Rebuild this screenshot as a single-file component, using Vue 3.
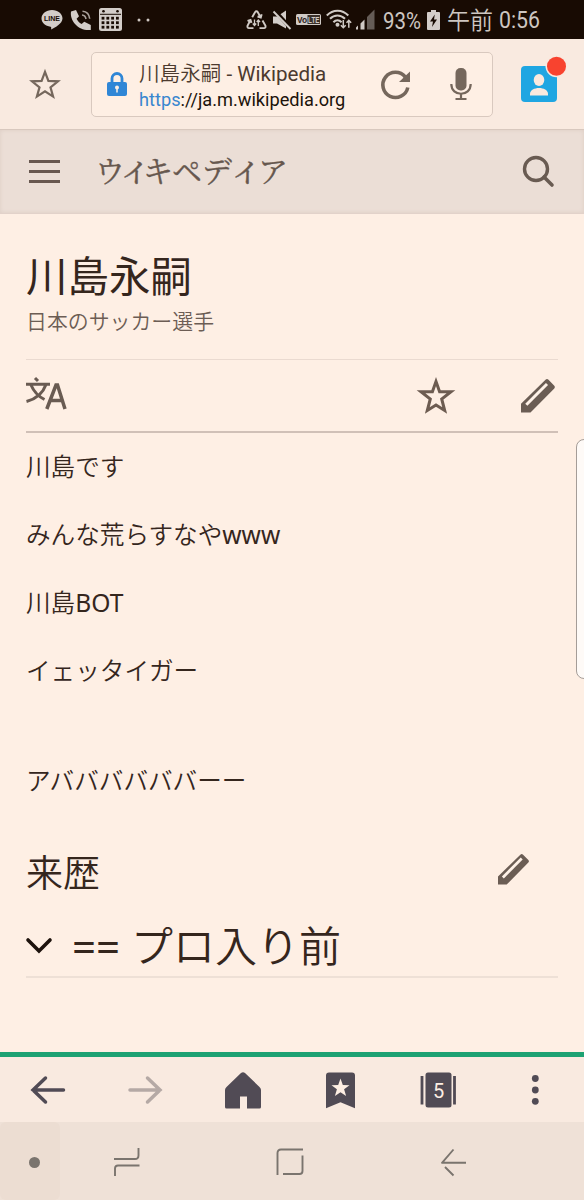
<template>
  <div class="screen">
    <header class="status">
      <svg class="status__line" width="22" height="22" viewBox="0 0 22 22">
        <path d="M11 1C5 1 .5 4.800.5 9.500c0 4.300 4 7.500 9 8.200.9.200.8.900.6 2.700 3.500-1.500 11.400-5.800 11.400-10.900C21.500 4.800 17 1 11 1z" fill="#d3cdc9" />
        <text x="11" y="12" text-anchor="middle" class="line-text">LINE</text>
      </svg>
      <svg class="status__phone" width="22" height="22" viewBox="0 0 22 22">
        <path d="M1 2.500 6 1l3 6.300-2.400 2.500c1 2.300 2.600 4 5 5.200l2.700-2.300 6.500 3.200v5C9.500 22.500-.5 12.500 1 2.500z" fill="#d3cdc9" />
        <path d="M12.500 2.200c4 .3 6.800 3.300 7.200 7.600M12 6c2.200.2 3.600 1.600 4 4" fill="none" stroke="#aaa29c" stroke-width="1.600" />
      </svg>
      <svg class="status__calendar" width="23" height="23" viewBox="0 0 23 23">
        <rect width="23" height="23" rx="2.500" fill="#d3cdc9" />
        <path d="M1 6.300h21" stroke="#180b03" stroke-width="1" />
        <circle cx="4.500" cy="3.200" r="1.300" fill="#180b03" />
        <circle cx="18.500" cy="3.200" r="1.300" fill="#180b03" />
        <g fill="#180b03">
          <rect v-for="cell in calendarCells" :key="cell.id" :x="cell.x" :y="cell.y" width="2.800" height="2.800" />
        </g>
      </svg>
      <svg class="status__dots" width="14" height="4" viewBox="0 0 14 4">
        <circle cx="2" cy="2" r="1.500" fill="#cfc8c3" />
        <circle cx="11" cy="2" r="1.500" fill="#cfc8c3" />
      </svg>
      <svg class="status__recycle" width="21" height="20" viewBox="0 0 21 20">
        <g fill="none" stroke="#d0cac5" stroke-width="1.900">
          <path d="M6.200 7.200 9 2.200q1.400-1.800 2.800 0l2.700 4.800M11.500 6.500l3.300 1 .9-3.300M16.500 10.500l3 5.300q.3 2.200-1.500 2.300h-4.500M4.500 10l-3 5.700q-.4 2.200 1.500 2.400h4.500M1.500 10.800l3-.9 1 3" />
          <path d="M8.500 9.500v6M6.800 13.500l1.700 2 1.700-2M12.300 16v-6M10.700 12l1.600-2 1.700 2" stroke-width="1.300" />
        </g>
      </svg>
      <svg class="status__mute" width="19" height="20" viewBox="0 0 19 20">
        <path d="M0 6.500h4L13 .5v18l-9-5H0z" fill="#d3cdc9" />
        <path d="M1.500.5 18 18.500" stroke="#180b03" stroke-width="4" />
        <path d="M.5 1.500 17.500 19" stroke="#d3cdc9" stroke-width="1.900" />
      </svg>
      <svg class="status__volte" width="25" height="11" viewBox="0 0 25 11">
        <rect width="25" height="11" rx="1.500" fill="#d0cac5" />
        <rect x="11.500" y="1" width="12.500" height="9" fill="#3b3029" />
        <text x="1" y="8.800" textLength="10" lengthAdjust="spacingAndGlyphs" class="volte-text">Vo</text>
        <text x="12" y="8.800" textLength="11.500" lengthAdjust="spacingAndGlyphs" class="volte-text volte-text--light">LTE</text>
      </svg>
      <svg class="status__wifi" width="26" height="21" viewBox="0 0 26 21">
        <g fill="none" stroke="#d0cac5" stroke-width="2">
          <path d="M.8 6.500c6-6.500 15.500-6.500 21.500 0M4 9.800c4.300-4.500 10.500-4.500 15 0M7.400 13.200c2.500-2.600 5.600-2.600 8.200 0" />
          <path d="M17.300 11v7.500M14.900 16.300l2.400 2.400 2.400-2.400M22.800 18.700v-7M20.500 13.700l2.300-2.300 2.400 2.300" stroke-width="1.500" />
        </g>
        <circle cx="11.500" cy="15.800" r="2" fill="#d0cac5" />
      </svg>
      <svg class="status__signal" width="19" height="21" viewBox="0 0 19 21">
        <path d="M0 20.500v-2l2-2v4zM4.500 20.500v-6l4-4v10z" fill="#d0cac5" />
        <path d="M11 20.500V8l7.500-7.500v20z" fill="#655c56" />
      </svg>
      <svg class="status__percent" width="40" height="36" viewBox="0 0 40 36">
        <text x="0" y="26.500" textLength="38" lengthAdjust="spacingAndGlyphs" class="status-text">93%</text>
      </svg>
      <svg class="status__battery" width="13" height="20" viewBox="0 0 13 20">
        <path d="M4 0h5v2h3q1 0 1 1v16q0 1-1 1H1q-1 0-1-1V3q0-1 1-1h3z" fill="#d3cdc9" />
        <path d="M7.800 4.500 3 11.500h3l-1 5.500 5-7.500H7z" fill="#180b03" />
      </svg>
      <svg class="status__time" width="96" height="39" viewBox="0 0 96 39">
        <text x="0" y="29" textLength="46" lengthAdjust="spacingAndGlyphs" class="status-text status-text--jp">午前</text>
        <text x="52" y="28" textLength="41" lengthAdjust="spacingAndGlyphs" class="status-text">0:56</text>
      </svg>
    </header>

    <div class="browser">
      <svg class="browser__star" width="32" height="31" viewBox="0 0 32 31">
        <path d="M16 2.800l3.400 9.100 9.600.4-7.500 6 2.600 9.300-8.100-5.300-8.100 5.300 2.600-9.300-7.500-6 9.600-.4z" fill="none" stroke="#75675c" stroke-width="2.200" />
      </svg>
      <div class="address">
        <svg class="address__lock" width="20" height="24" viewBox="0 0 20 24">
          <path d="M5 11V6.500a5 5 0 0 1 10 0V11" fill="none" stroke="#2f86d6" stroke-width="2.800" />
          <rect y="10" width="20" height="14" rx="2" fill="#2f86d6" />
          <circle cx="10" cy="15.500" r="2" fill="#fdefe4" />
          <path d="M10 16v4.500" stroke="#fdefe4" stroke-width="1.500" />
        </svg>
        <div class="address__text">
          <span class="address__title">川島永嗣<span class="latin"> - Wikipedia</span></span>
          <span class="address__url"><span class="address__scheme">https</span>://ja.m.wikipedia.org</span>
        </div>
        <svg class="address__reload" width="31" height="31" viewBox="0 0 31 31">
          <path d="M27.800 18.500A12.600 12.600 0 1 1 25.300 8" fill="none" stroke="#75675c" stroke-width="3.600" />
          <path d="M30 2.500V13H19z" fill="#75675c" />
        </svg>
        <svg class="address__mic" width="22" height="34" viewBox="0 0 22 34">
          <rect x="5.500" y="1" width="11" height="22.500" rx="5" fill="#75675c" />
          <path d="M1.300 17c0 13 19.400 13 19.400 0" fill="none" stroke="#75675c" stroke-width="2.200" />
          <path d="M11 26.500v5M5.500 32h11" stroke="#75675c" stroke-width="2.200" />
        </svg>
      </div>
      <svg class="browser__profile" width="46" height="47" viewBox="0 0 46 47">
        <rect x="0" y="10" width="36" height="36" rx="4" fill="#1fa6e2" />
        <ellipse cx="18" cy="24" rx="5.300" ry="6" fill="#fbe9de" />
        <path d="M9 39.500V38c0-8 18-8 18 0v1.500z" fill="#fbe9de" />
        <circle cx="35.500" cy="10.300" r="11" fill="#f8e9df" />
        <circle cx="35.500" cy="10.300" r="9.500" fill="#f8432f" />
      </svg>
    </div>

    <div class="site">
      <svg class="site__menu" width="31" height="23" viewBox="0 0 31 23">
        <path d="M0 1.500h31M0 11.500h31M0 21.500h31" stroke="#685850" stroke-width="3" />
      </svg>
      <svg class="site__name" width="192" height="52" viewBox="0 0 192 52">
        <text y="36" class="site-text"><tspan x="-2">ウ</tspan><tspan x="20" class="site-text__small">ィ</tspan><tspan x="46">キ</tspan><tspan x="75">ペ</tspan><tspan x="105">デ</tspan><tspan x="131" class="site-text__small">ィ</tspan><tspan x="161">ア</tspan></text>
      </svg>
      <svg class="site__search" width="33" height="33" viewBox="0 0 33 33">
        <circle cx="14" cy="14" r="11.500" fill="none" stroke="#695b52" stroke-width="3.400" />
        <path d="M22 22l8 8" stroke="#695b52" stroke-width="3.600" stroke-linecap="round" />
      </svg>
    </div>

    <main class="article">
      <h1 class="article__title">川島永嗣</h1>
      <p class="article__description">日本のサッカー選手</p>
      <div class="actions">
        <svg class="actions__language" width="41" height="33" viewBox="0 0 41 33">
          <path d="M0 7.200h24M9 1l3 3M20 7.500C17 16 10 22 .5 24.500M5 8c3 7 6.500 11 13.500 14.500" fill="none" stroke="#695b52" stroke-width="3" />
          <path d="M20.800 32 30 8h1.500L39 32M24 23.500h12" fill="none" stroke="#695b52" stroke-width="3.500" />
        </svg>
        <svg class="actions__star" width="38" height="38" viewBox="0 0 38 38">
          <path d="M19 4.500l3.600 10.200H34l-9.300 7.300 3 11.500-8.700-5.500-8.700 5.500 3-11.500L4 14.700h11.400z" fill="none" stroke="#6d5c51" stroke-width="3" />
        </svg>
        <svg class="actions__edit" width="34" height="34" viewBox="0 0 34 34">
          <path d="M0 33.500v-8.700L24.500.7q1.500-1.200 3 0l5.800 6q1.300 1.400 0 2.700L9.500 33.500z" fill="#6b5d54" />
          <path d="M5.300 25.700 26 5" stroke="#fff2e8" stroke-width="3" />
        </svg>
      </div>
      <p v-for="line in paragraphs" :key="line.text" class="article__line">
        {{ line.text }}<span v-if="line.latin" class="latin">{{ line.latin }}</span>
      </p>
      <div class="section">
        <h2 class="section__title">来歴</h2>
        <svg class="section__edit" width="31" height="31" viewBox="0 0 34 34">
          <path d="M0 33.500v-8.700L24.500.7q1.500-1.200 3 0l5.800 6q1.300 1.400 0 2.700L9.500 33.500z" fill="#6b5d54" />
          <path d="M5.300 25.700 26 5" stroke="#fff2e8" stroke-width="3" />
        </svg>
      </div>
      <div class="subsection">
        <svg class="subsection__chevron" width="26" height="16" viewBox="0 0 26 16">
          <path d="M2 2l11 11L24 2" fill="none" stroke="#1e130d" stroke-width="3.600" stroke-linecap="round" />
        </svg>
        <h2 class="subsection__title"><span class="latin">== </span>プロ入り前</h2>
      </div>
      <div class="edge-panel"></div>
    </main>

    <nav class="toolbar">
      <svg class="toolbar__item" width="40" height="40" viewBox="0 0 40 40">
        <path d="M35.500 20H5M17.500 8 5 20l12.500 12" fill="none" stroke="#514b55" stroke-width="3.500" stroke-linecap="round" />
      </svg>
      <svg class="toolbar__item" width="40" height="40" viewBox="0 0 40 40">
        <path d="M5 20h30M22.500 8 35 20 22.500 32" fill="none" stroke="#b5a9a5" stroke-width="3.500" stroke-linecap="round" />
      </svg>
      <svg class="toolbar__item" width="40" height="40" viewBox="0 0 40 40">
        <path d="M18 3q2-1.500 4 0l14.500 14q1.500 1.500 1.500 3v17q0 1.500-1.500 1.500H24V26.500h-7v12H3.500Q2 38.500 2 37V20q0-1.500 1.500-3z" fill="#514b55" />
      </svg>
      <svg class="toolbar__item" width="40" height="40" viewBox="0 0 40 40">
        <path d="M9 2.500h23q3 0 3 3v32.700l-14.500-6-14.500 6V5.500q0-3 3-3z" fill="#514b55" />
        <path d="M20.500 8.500l2.300 6.500 6.700.2-5.400 4.100 2 6.800-5.600-3.900-5.600 3.900 2-6.800-5.400-4.100 6.700-.2z" fill="#fdeee3" />
      </svg>
      <svg class="toolbar__item" width="40" height="40" viewBox="0 0 40 40">
        <rect x="7.500" y="2.500" width="26" height="35" rx="2.500" fill="#514b55" />
        <path d="M4 6v28.500M36.500 6v28.500" stroke="#514b55" stroke-width="2.800" />
        <text x="20.500" y="27.500" text-anchor="middle" class="tab-count">5</text>
      </svg>
      <svg class="toolbar__item" width="40" height="40" viewBox="0 0 40 40">
        <circle cx="20.300" cy="8.500" r="3.400" fill="#514b55" />
        <circle cx="20.300" cy="20" r="3.400" fill="#514b55" />
        <circle cx="20.300" cy="31.300" r="3.400" fill="#514b55" />
      </svg>
    </nav>

    <footer class="system">
      <div class="system__pin"><span class="system__dot"></span></div>
      <svg class="system__recent" width="26" height="30" viewBox="0 0 26 30">
        <path d="M0 12h21q3.500 0 3.500-3.500V1M25.500 18.500H4q-3 0-3 3V29" fill="none" stroke="#7a746e" stroke-width="1.900" />
      </svg>
      <svg class="system__home" width="28" height="28" viewBox="0 0 28 28">
        <path d="M1.500 27V5q0-3.500 3.500-3.500h22M26.500 7.500V23q0 3-3 3H7" fill="none" stroke="#7a746e" stroke-width="1.900" />
      </svg>
      <svg class="system__back" width="27" height="29" viewBox="0 0 27 29">
        <path d="M26 14.800H2L13.500 1.500M5 19l8.500 8.500" fill="none" stroke="#7a746e" stroke-width="1.900" stroke-linejoin="round" />
      </svg>
    </footer>
  </div>
</template>

<script setup>
const paragraphs = [
  { text: '川島です' },
  { text: 'みんな荒らすなや', latin: 'www' },
  { text: '川島', latin: 'BOT' },
  { text: 'イェッタイガー' },
  { text: 'アババババババーー' },
];

const calendarCells = [];
for (let row = 0; row < 3; row++) {
  for (let col = 0; col < 4; col++) {
    calendarCells.push({ id: `${row}-${col}`, x: 2.6 + col * 4.8, y: 8.8 + row * 4.5 });
  }
}
</script>

<style>
body {
  margin: 0;
  background: #feefe4;
}
</style>

<style scoped>
.screen {
  display: flex;
  flex-direction: column;
  width: 584px;
  height: 1200px;
  overflow: hidden;
  background: #feefe4;
  color: #35261d;
  font-family: 'Noto Sans', 'Noto Sans CJK JP', sans-serif;
}

svg {
  display: block;
  flex: none;
  overflow: visible;
}

.latin {
  font-weight: 400;
}

.status {
  display: flex;
  align-items: center;
  box-sizing: border-box;
  height: 39px;
  padding-left: 41px;
  background: #180b03;
}

.status__phone {
  margin-left: 7px;
}

.status__calendar {
  margin-left: 7px;
}

.status__dots {
  margin-left: 15px;
}

.status__recycle {
  margin-left: 95px;
}

.status__mute {
  margin-left: 6px;
}

.status__volte {
  margin-left: 4px;
}

.status__wifi {
  margin-left: 5px;
}

.status__signal {
  margin-left: 4px;
}

.status__percent {
  margin-left: 8px;
}

.status__battery {
  margin-left: 4px;
}

.status__time {
  margin-left: 7px;
}

.line-text {
  font: bold 7px 'Liberation Sans', sans-serif;
  fill: #180b03;
}

.volte-text {
  font: bold 8.5px 'Liberation Sans', sans-serif;
  fill: #2b2019;
}

.volte-text--light {
  fill: #d0cac5;
}

.status-text {
  font: 24px Roboto, sans-serif;
  fill: #cdc6c1;
}

.status-text--jp {
  font-family: 'Noto Sans CJK JP', sans-serif;
  font-weight: 350;
}

.browser {
  display: flex;
  align-items: center;
  box-sizing: border-box;
  height: 91px;
  border-bottom: 1px solid #d8c8be;
  padding-left: 29px;
  background: #f9eae0;
}

.address {
  display: flex;
  align-items: center;
  box-sizing: border-box;
  width: 402px;
  height: 65px;
  margin-left: 30px;
  border: 1.500px solid #d9c9bf;
  border-radius: 5px;
  padding-left: 15px;
  background: #feefe4;
}

.address__text {
  display: flex;
  flex-direction: column;
  width: 226px;
  margin: 4px 0 0 12px;
  font-family: Roboto, 'Noto Sans CJK JP', sans-serif;
  white-space: nowrap;
}

.address__title {
  font-size: 20.600px;
  font-weight: 350;
  line-height: 27px;
  color: #4c3a2f;
}

.address__url {
  font-size: 18.200px;
  line-height: 24px;
  color: #20130b;
}

.address__scheme {
  color: #3886cf;
}

.address__reload {
  margin-left: 15px;
}

.address__mic {
  margin-left: 39px;
}

.browser__profile {
  margin: 0 0 10px 28px;
}

.site {
  display: flex;
  align-items: center;
  box-sizing: border-box;
  height: 84px;
  border-bottom: 1px solid #e2d2ca;
  padding-left: 29px;
  background: #ebded6;
  box-shadow: inset 0 0 4px #ddcdc4;
}

.site__name {
  margin-left: 37px;
}

.site-text {
  font: 400 30px 'Noto Serif CJK JP', 'Noto Sans CJK JP', serif;
  fill: #66574e;
  stroke: #66574e;
  stroke-width: 0.4px;
}

.site-text__small {
  font-size: 36px;
}

.site__search {
  margin-left: 233px;
}

.article {
  position: relative;
  flex: 1;
  padding: 35px 26px 0;
}

.article__title {
  margin: 0;
  font-size: 41.500px;
  font-weight: 400;
  line-height: 54px;
}

.article__description {
  margin: 3px 0 0;
  font-size: 20.900px;
  font-weight: 350;
  line-height: 30px;
  color: #6c5d54;
}

.actions {
  display: flex;
  align-items: center;
  box-sizing: border-box;
  height: 74px;
  margin-top: 23px;
  border-top: 1px solid #eadad0;
  border-bottom: 2px solid #d0c0b7;
}

.actions__language {
  margin-bottom: 4px;
}

.actions__star {
  margin-left: 350px;
}

.actions__edit {
  margin-left: 66px;
}

.article__line {
  margin: 0;
  font-size: 24.600px;
  font-weight: 350;
  line-height: 68px;
}

.article__line:nth-of-type(6) {
  margin-top: 42px;
}

.section {
  display: flex;
  align-items: center;
  justify-content: space-between;
  height: 54px;
  margin-top: 31px;
  padding-right: 29px;
}

.section__title {
  margin: 0;
  font-size: 37px;
  font-weight: 350;
  line-height: 54px;
}

.section__edit {
  margin-bottom: 8px;
}

.subsection {
  display: flex;
  align-items: center;
  height: 76px;
  border-bottom: 2px solid #eee0d6;
}

.subsection__chevron {
  margin-top: 15px;
}

.subsection__title {
  margin: 15px 0 0 20px;
  font-size: 42px;
  font-weight: 350;
  line-height: 60px;
}

.edge-panel {
  position: absolute;
  top: 225px;
  right: -8px;
  box-sizing: border-box;
  width: 16px;
  height: 240px;
  border: 1px solid #a59d98;
  border-radius: 8px;
  background: #fefaf7;
}

.toolbar {
  display: flex;
  align-items: center;
  justify-content: space-between;
  box-sizing: border-box;
  height: 70px;
  border-top: 5px solid #1da273;
  padding: 0 29px 0 28px;
  background: #f9eae0;
}

.tab-count {
  font: 20px Roboto, sans-serif;
  fill: #fdeee3;
}

.system {
  display: flex;
  align-items: center;
  height: 78px;
  background: #efe1d7;
}

.system__pin {
  display: flex;
  align-items: center;
  box-sizing: border-box;
  width: 60px;
  height: 78px;
  border-radius: 6px;
  padding: 2px 0 0 29px;
  background: #ecddd2;
}

.system__dot {
  width: 11px;
  height: 11px;
  border-radius: 50%;
  background: #7a746e;
}

.system__recent {
  margin: 2px 0 0 54px;
}

.system__home {
  margin: 2px 0 0 136px;
}

.system__back {
  margin: 2px 0 0 136px;
}
</style>
